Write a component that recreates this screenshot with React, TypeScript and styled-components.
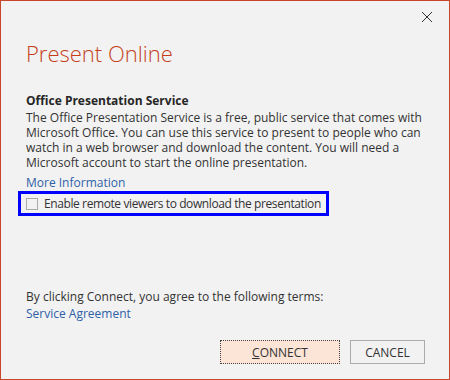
import styled, { createGlobalStyle } from 'styled-components';

const GlobalStyle = createGlobalStyle`
  html, body {
    margin: 0;
    padding: 0;
    background: #f2f2f2;
  }
`;

const FONT = `"Open Sans", "Noto Sans", "DejaVu Sans", sans-serif`;

const Dialog = styled.div`
  box-sizing: border-box;
  width: 450px;
  height: 380px;
  border: 1px solid #c8472b;
  background: #f2f2f2;
  font-family: ${FONT};
  font-size: 12px;
  color: #333333;
  display: flex;
  flex-direction: column;
  padding: 0 0 0 25px;
  position: relative;
`;

const CloseButton = styled.button`
  position: absolute;
  top: 10px;
  left: 420px;
  width: 12px;
  height: 12px;
  padding: 0;
  border: none;
  background: transparent;
  display: flex;
  align-items: center;
  justify-content: center;
`;

const Title = styled.h1`
  margin: 37px 0 0 0;
  font-weight: 300;
  font-size: 22px;
  line-height: 30px;
  color: #c43e1c;
`;

const Heading = styled.h2`
  margin: 24px 0 0 0;
  font-size: 12px;
  font-weight: 700;
  line-height: 17px;
  color: #262626;
`;

const Body = styled.p`
  margin: 1px 0 0 0;
  width: 400px;
  line-height: 15px;
`;

const Link = styled.a<{ $gap?: number }>`
  color: #2f5fa7;
  text-decoration: none;
  line-height: 17px;
  display: block;
  margin-top: ${p => p.$gap ?? 0}px;
`;

const Highlight = styled.div`
  box-sizing: border-box;
  margin: 0 0 0 -8px;
  width: 311px;
  height: 25px;
  border: 3px solid #0000ff;
  display: flex;
  align-items: center;
  gap: 6px;
  padding-left: 5px;
`;

const Box = styled.span`
  box-sizing: border-box;
  flex: none;
  width: 12px;
  height: 12px;
  border: 1px solid #aaaaaa;
  background: #f2f2f2;
`;

const Label = styled.span`
  white-space: nowrap;
  letter-spacing: -0.4px;
`;

const Terms = styled.div`
  margin-top: 72px;
  line-height: 17px;
`;

const Footer = styled.div`
  margin-top: 18px;
  display: flex;
  justify-content: flex-end;
  gap: 10px;
  padding-right: 24px;
`;

const Button = styled.button<{ $primary?: boolean }>`
  box-sizing: border-box;
  height: 24px;
  padding: 0;
  outline: none;
  font-family: ${FONT};
  font-size: 12px;
  color: #333333;
  background: ${p => (p.$primary ? '#fce4d6' : '#f2f2f2')};
  border-width: 1px;
  border-style: ${p => (p.$primary ? 'dotted' : 'solid')};
  border-color: ${p => (p.$primary ? '#444444' : '#ababab')};
  width: ${p => (p.$primary ? '120px' : '75px')};
`;

export default function App() {
  return (
    <>
      <GlobalStyle />
      <Dialog>
        <CloseButton aria-label="Close">
          <svg width="12" height="12" viewBox="0 0 12 12">
            <path d="M1 1 L11 11 M11 1 L1 11" stroke="#333" strokeWidth="1" />
          </svg>
        </CloseButton>
        <Title>Present Online</Title>
        <Heading>Office Presentation Service</Heading>
        <Body>
          The Office Presentation Service is a free, public service that comes with Microsoft
          Office. You can use this service to present to people who can watch in a web browser
          and download the content. You will need a Microsoft account to start the online
          presentation.
        </Body>
        <Link href="#" $gap={4}>More Information</Link>
        <Highlight>
          <Box />
          <Label>Enable remote viewers to download the presentation</Label>
        </Highlight>
        <Terms>By clicking Connect, you agree to the following terms:</Terms>
        <Link href="#">Service Agreement</Link>
        <Footer>
          <Button $primary>
            <u>C</u>ONNECT
          </Button>
          <Button>CANCEL</Button>
        </Footer>
      </Dialog>
    </>
  );
}
